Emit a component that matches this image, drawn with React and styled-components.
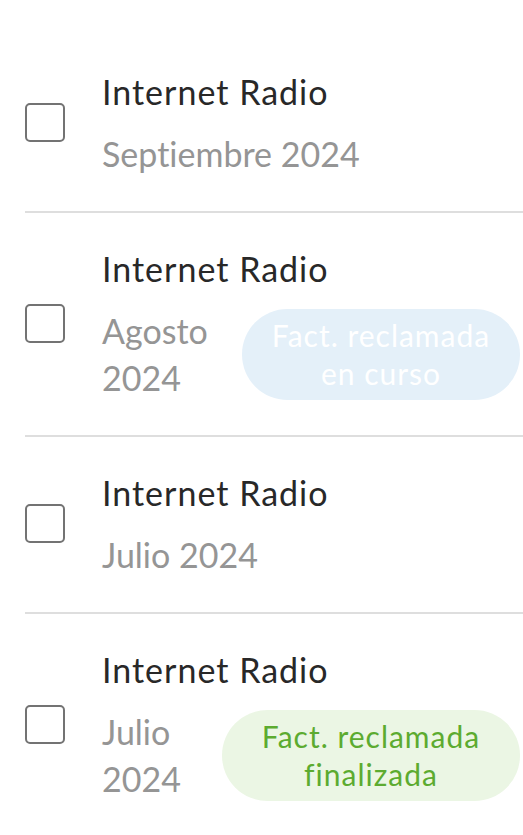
import styled, { createGlobalStyle } from "styled-components";

const GlobalStyle = createGlobalStyle`
  body {
    margin: 0;
    background: #ffffff;
    font-family: "Lato", "Open Sans", sans-serif;
    font-variant-ligatures: none;
  }
`;

const bills = [
  { id: 1, title: "Internet Radio", date: "Septiembre 2024" },
  {
    id: 2,
    title: "Internet Radio",
    date: "Agosto 2024",
    status: "progress",
    label: ["Fact. reclamada", "en curso"],
    badgeWidth: 278,
  },
  { id: 3, title: "Internet Radio", date: "Julio 2024" },
  {
    id: 4,
    title: "Internet Radio",
    date: "Julio 2024",
    status: "done",
    label: ["Fact. reclamada", "finalizada"],
    badgeWidth: 298,
  },
];

export default function App() {
  return (
    <Page>
      <GlobalStyle />
      <List>
        {bills.map((bill) => (
          <Row key={bill.id}>
            <Checkbox type="checkbox" aria-label={bill.title} />
            <Info>
              <Title>{bill.title}</Title>
              <BottomLine>
                <DateText>{bill.date}</DateText>
                {bill.status && (
                  <Badge $status={bill.status} $width={bill.badgeWidth}>
                    {bill.label[0]}
                    <br />
                    {bill.label[1]}
                  </Badge>
                )}
              </BottomLine>
            </Info>
          </Row>
        ))}
      </List>
    </Page>
  );
}

const Page = styled.div`
  width: 523px;
  min-height: 835px;
  overflow: hidden;
  background: #ffffff;
`;

const List = styled.div`
  padding-top: 36px;
  display: flex;
  flex-direction: column;
`;

const Row = styled.div`
  display: flex;
  align-items: center;
  gap: 37px;
  margin-left: 25px;
  padding: 32px 3px 34px 0;
  border-bottom: 2px solid #dedede;

  &:last-child {
    border-bottom: none;
  }
`;

const Checkbox = styled.input`
  appearance: none;
  flex: none;
  width: 40px;
  height: 39px;
  margin: 0;
  border: 2.5px solid #737373;
  border-radius: 5px;
  background: #ffffff;
  box-sizing: border-box;
`;

const Info = styled.div`
  flex: 1;
  min-width: 0;
  display: flex;
  flex-direction: column;
  gap: 15px;
`;

const Title = styled.div`
  font-size: 34px;
  line-height: 47px;
  letter-spacing: 1px;
  color: #282828;
`;

const BottomLine = styled.div`
  display: flex;
  align-items: center;
  gap: 30px;
`;

const DateText = styled.div`
  flex: 1;
  min-width: 0;
  font-size: 34px;
  line-height: 47px;
  color: #959595;
`;

const Badge = styled.div`
  flex: none;
  width: ${(p) => p.$width}px;
  height: 91px;
  box-sizing: border-box;
  display: flex;
  align-items: center;
  justify-content: center;
  text-align: center;
  border-radius: 46px;
  font-size: 30px;
  line-height: 38px;
  letter-spacing: 1px;
  background: ${(p) => (p.$status === "done" ? "#ebf6e4" : "#e4f0f9")};
  color: ${(p) => (p.$status === "done" ? "#5cab30" : "#ffffff")};
`;
